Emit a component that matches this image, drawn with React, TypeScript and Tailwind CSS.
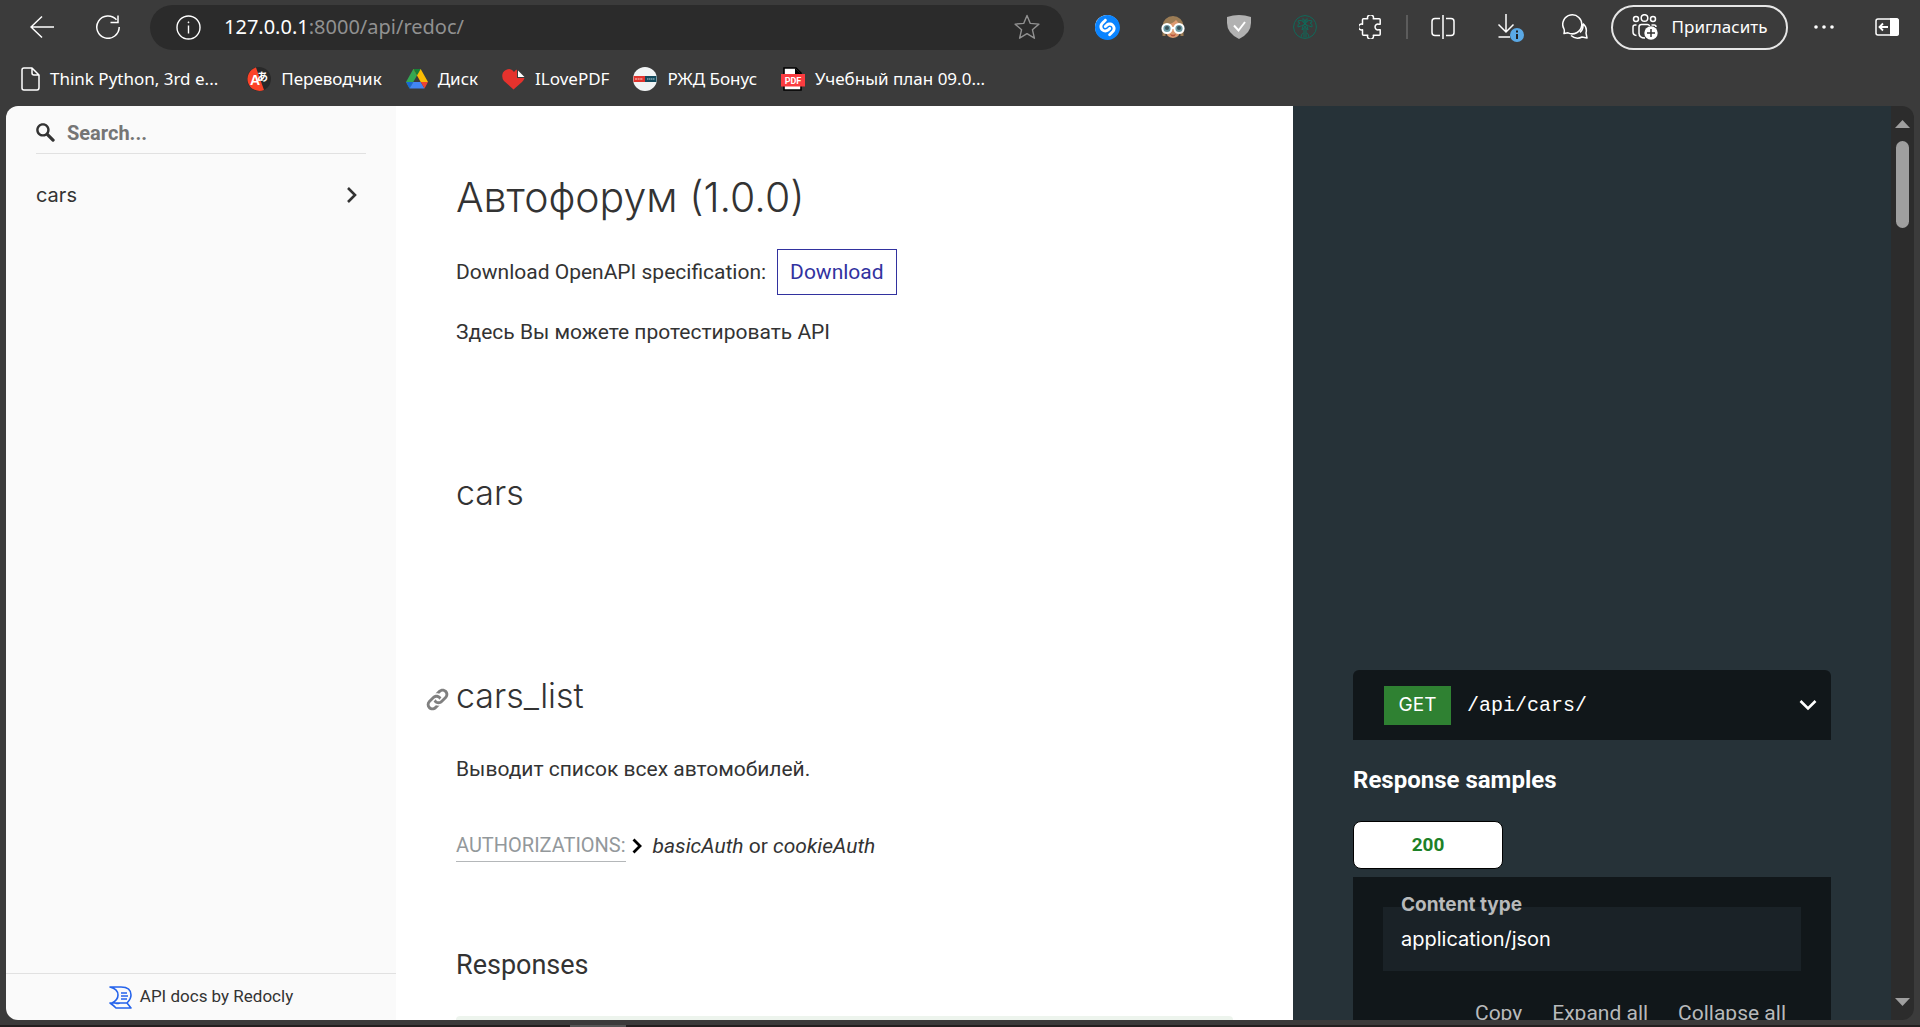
import type { ReactNode } from "react";
import { SiShazam } from "react-icons/si";

const UI = "font-['Noto_Sans','Open_Sans',sans-serif]";
const BODY = "font-['Roboto',sans-serif]";
const HEAD = "font-['Inter','Noto_Sans',sans-serif]";

function ToolButton({ label, children }: { label: string; children: ReactNode }) {
  return (
    <button type="button" aria-label={label} className="flex h-11 w-[66px] shrink-0 items-center justify-center text-white">
      {children}
    </button>
  );
}

function Bookmark({ icon, children }: { icon: ReactNode; children: ReactNode }) {
  return (
    <a href="#" className="flex items-center gap-[10px] text-[17px] leading-6 whitespace-nowrap text-white first:mr-[5px]">
      {icon}
      {children}
    </a>
  );
}

function Toolbar() {
  return (
    <div className="flex h-[54px] items-center">
      <button type="button" aria-label="Back" className="ml-[30px] text-white">
        <svg width="24" height="24" viewBox="0 0 24 24" fill="none" stroke="currentColor" strokeWidth="1.5">
          <path d="M12 1.5 1 12l11 10.5M1 12h23" />
        </svg>
      </button>
      <button type="button" aria-label="Reload" className="ml-[42px] text-white">
        <svg width="24" height="24" viewBox="0 0 24 24" fill="none" stroke="currentColor" strokeWidth="1.5">
          <path d="M20.5 4.8A11.2 11.2 0 1 0 23.2 12M22 0.500v7h-7.500" />
        </svg>
      </button>
      <div className="mr-[10px] ml-[30px] flex h-[45px] min-w-0 flex-1 items-center rounded-full bg-[#2b2b2b] px-6">
        <svg className="ml-[2px] shrink-0" width="25" height="25" viewBox="0 0 25 25" fill="none" stroke="#fff" strokeWidth="1.4">
          <circle cx="12.500" cy="12.500" r="11.500" />
          <path d="M12.500 10.500v8" />
          <circle cx="12.500" cy="7.300" r="0.600" fill="#fff" strokeWidth="0.600" />
        </svg>
        <div className="relative ml-[23px] flex-1 text-[20px] leading-7">
          <div className="whitespace-nowrap text-[#919191]">
            <span className="text-white">127.0.0.1</span>:8000/api/redoc/
          </div>
          <input aria-label="Address" className="absolute inset-0 w-full bg-transparent text-transparent outline-none" />
        </div>
        <button type="button" aria-label="Add to favourites" className="text-[#919191]">
          <svg width="26" height="26" viewBox="0 0 26 26" fill="none" stroke="currentColor" strokeWidth="1.4" strokeLinejoin="round">
            <path d="m13 1.500 3.300 7.900 8.600.700-6.500 5.600 2 8.500L13 19.700l-7.400 4.500 2-8.500L1.100 10.100l8.600-.700z" />
          </svg>
        </button>
      </div>

      <ToolButton label="Shazam">
        <span className="flex size-6 items-center justify-center rounded-full bg-white">
          <SiShazam size={25} color="#0a84ff" className="shrink-0" />
        </span>
      </ToolButton>
      <ToolButton label="Profile extension">
        <svg width="24" height="24" viewBox="0 0 24 24">
          <path d="M1.500 21V11a10.500 10 0 0 1 21 0v10h-3V12h-15v9z" fill="#9b7c55" />
          <path d="M4 10q8-1 11-5 2 3 5 4v6q-1 7-8 8-7-1-8-8z" fill="#dd9a70" />
          <path d="M9 19q3 1.500 6 0-1 2.500-3 2.500T9 19z" fill="#b9573f" />
          <circle cx="6" cy="13.500" r="4.600" fill="#6c9ca6" stroke="#fff" strokeWidth="2" />
          <circle cx="18" cy="13.500" r="4.600" fill="#6c9ca6" stroke="#fff" strokeWidth="2" />
          <path d="M10.500 13h3" stroke="#fff" strokeWidth="2" />
          <circle cx="6" cy="13" r="2" fill="#3c525a" />
          <circle cx="18" cy="13" r="2" fill="#3c525a" />
        </svg>
      </ToolButton>
      <ToolButton label="Ad blocker">
        <svg width="24" height="24" viewBox="0 0 24 24">
          <path d="M0 2q12-4 24 0v6q0 10-12 16Q0 18 0 8z" fill="#b1b1b1" />
          <path d="m7 10.500 4.500 5L18 7" fill="none" stroke="#fff" strokeWidth="2" />
        </svg>
      </ToolButton>
      <ToolButton label="Palm extension">
        <svg width="24" height="24" viewBox="0 0 24 24" fill="none" stroke="#0f6a5a" strokeWidth="1">
          <circle cx="12" cy="12" r="11.400" />
          <path d="M12 9q-3-5-7-3 0 2 2 2-3 1-2 4 4-1 7-3zm0 0q3-5 7-3 0 2-2 2 3 1 2 4-4-1-7-3zm0 0q-3 2-3 6 2-1 3-4m0-2q3 2 3 6-2-1-3-4m0-2Q9 6 10 3.500q2 1 2 4 0-3 2-4 1 2.500-2 5.500M11 13v9.500M13 13v9.500M8 22q0-3 2.500-4M16 22q0-3-2.500-4" />
        </svg>
      </ToolButton>
      <ToolButton label="Extensions">
        <svg width="24" height="24" viewBox="0 0 24 24" fill="none" stroke="currentColor" strokeWidth="1.500" strokeLinejoin="round">
          <path d="M4.500 3.800h4.200a3 3 0 1 1 5.600 0h5.900q1 0 1 1v4.400h-1.500a2.900 2.900 0 1 0 0 5.600h1.500v4.400q0 1-1 1h-5.900a3 3 0 1 1-5.600 0H4.500q-1 0-1-1v-4.400a3 3 0 1 1 0-5.600V4.800q0-1 1-1z" />
        </svg>
      </ToolButton>
      <div className="mx-[2px] h-6 w-[2px] shrink-0 bg-[#5c5c5c]" />
      <ToolButton label="Split screen">
        <svg width="24" height="24" viewBox="0 0 24 24" fill="none" stroke="currentColor" strokeWidth="1.500">
          <path d="M12 0v24M9 3.500H4q-3 0-3 3v11q0 3 3 3h5M15 3.500h5q3 0 3 3v11q0 3-3 3h-5" />
        </svg>
      </ToolButton>
      <ToolButton label="Downloads">
        <svg className="ml-[4px]" width="28" height="30" viewBox="0 0 28 30" fill="none" stroke="currentColor" strokeWidth="1.500">
          <path d="M9 2v17.500M1.500 12.500 9 20l7.500-7.500M1.500 25H13" />
          <circle cx="20" cy="23" r="7" fill="#5aa9e6" stroke="none" />
          <path d="M20 22v5M20 18.500v2" stroke="#222" strokeWidth="2" />
        </svg>
      </ToolButton>
      <ToolButton label="Chat">
        <svg width="26" height="26" viewBox="0 0 26 26" fill="none" stroke="currentColor" strokeWidth="1.500" strokeLinejoin="round">
          <path d="M2 19.500q.700-3 0-4.500a9.500 9.500 0 1 1 4 3.800zM21 9.500q4.500 4 3 9.500l1 5-5-1q-6 3-11-1.500M18 18.500q3.500-3 3-8.500" />
        </svg>
      </ToolButton>
      <button
        type="button"
        className="ml-[3px] flex h-[45px] w-[177px] shrink-0 items-center justify-center gap-[14px] rounded-full border-2 border-[#e6e6e6] text-[17px] leading-6 text-white"
      >
        <svg width="26" height="26" viewBox="0 0 26 26" fill="none" stroke="currentColor" strokeWidth="1.500">
          <circle cx="4" cy="5" r="2.500" />
          <circle cx="12.500" cy="4" r="3.300" />
          <circle cx="21" cy="5" r="2.500" />
          <path d="M4.500 11H3q-2 0-2 2v5q0 3 3.500 3.500M7 20v-7q0-2.500 2.500-2.500h6q1.500 0 2.200 1.500M7 19q0 5 6 5M19.500 11H22q2 0 2 2" />
          <circle cx="19" cy="19" r="6.700" fill="#fff" stroke="none" />
          <path d="M19 15v8M15 19h8" stroke="#333" />
        </svg>
        Пригласить
      </button>
      <ToolButton label="Settings and more">
        <svg className="ml-[6px]" width="20" height="4" viewBox="0 0 20 4" fill="currentColor">
          <circle cx="2" cy="2" r="1.800" />
          <circle cx="10" cy="2" r="1.800" />
          <circle cx="18" cy="2" r="1.800" />
        </svg>
      </ToolButton>
      <ToolButton label="Sidebar">
        <svg width="24" height="18" viewBox="0 0 24 18" fill="none" stroke="currentColor" strokeWidth="1.500">
          <rect x="1" y="1" width="22" height="16" rx="2" />
          <path d="M15 0h6.500Q24 0 24 2.500v13q0 2.500-2.500 2.500H15z" fill="#fff" stroke="none" />
          <path d="M13 9H5M8 5.500 4.500 9 8 12.500" strokeWidth="1.800" />
        </svg>
      </ToolButton>
    </div>
  );
}

function Bookmarks() {
  return (
    <nav aria-label="Bookmarks" className="flex h-[52px] items-center gap-6 pb-[2px] pl-5">
      <Bookmark
        icon={
          <svg width="20" height="24" viewBox="0 0 20 24" fill="none" stroke="#fff" strokeWidth="1.500" strokeLinejoin="round">
            <path d="M4 1h8l7 7v12.500q0 2.500-2 2.500H4q-2 0-2-2V3q0-2 2-2zM12 1v5q0 2 2 2h5" />
          </svg>
        }
      >
        Think Python, 3rd e...
      </Bookmark>
      <Bookmark
        icon={
          <svg width="24" height="24" viewBox="0 0 24 24">
            <circle cx="12" cy="12" r="12" fill="#292929" />
            <path d="M9 .400A12 12 0 1 0 17 23z" fill="#fc4328" />
            <text x="3" y="17.500" fontSize="14" fontWeight="700" fill="#fff" fontFamily="Liberation Sans, sans-serif">A</text>
            <text x="10" y="13.500" fontSize="11" fontWeight="700" fill="#fff" fontFamily="Noto Sans CJK JP, sans-serif">あ</text>
          </svg>
        }
      >
        Переводчик
      </Bookmark>
      <Bookmark
        icon={
          <svg width="22" height="20" viewBox="0 0 22 20">
            <path d="M7.300 0 0 13l3.500 6.500 7.500-13z" fill="#34a853" />
            <path d="M7.300 0h7.400L22 13h-7.300z" fill="#fbbc04" />
            <path d="M7.300 0h7.400L11 6.500z" fill="#188038" />
            <path d="M0 13h7.300l-3.800 6.500z" fill="#1967d2" />
            <path d="M7.300 13h7.400l3.800 6.500h-15z" fill="#4285f4" />
            <path d="M14.700 13H22l-3.500 6.500z" fill="#ea4335" />
          </svg>
        }
      >
        Диск
      </Bookmark>
      <Bookmark
        icon={
          <svg width="23" height="21" viewBox="0 0 23 21">
            <path d="M11.500 20.500 2 12Q-1 8 1 3.500 3.500 0 7.500 0q3 .500 4.500 3 1-2 3-2.500V9h7.500Q22 11 20 13z" fill="#e5322d" />
            <path d="M16 1.500V8h6.500z" fill="#fff" />
          </svg>
        }
      >
        ILovePDF
      </Bookmark>
      <Bookmark
        icon={
          <svg width="24" height="24" viewBox="0 0 24 24">
            <circle cx="12" cy="12" r="12" fill="#f1f4f5" />
            <path d="M.500 9H12v6H.500z" fill="#e1352f" />
            <path d="M12 9h11.500v6H12z" fill="#124a5d" />
            <path d="M2 12h8" stroke="#f0a09b" strokeWidth="1.500" strokeDasharray="2 .600" />
            <path d="M14 12h8" stroke="#7fa3ae" strokeWidth="1.500" strokeDasharray="1.500 .500" />
          </svg>
        }
      >
        РЖД Бонус
      </Bookmark>
      <Bookmark
        icon={
          <svg width="24" height="24" viewBox="0 0 24 24">
            <path d="M3 1h12l5 5v17H3z" fill="#fff" stroke="#000" strokeWidth="1.600" />
            <path d="M14 1v6h6.500z" fill="#000" />
            <path d="M0 7h24v12.500H0z" fill="#fb3c40" />
            <text x="12" y="17" textAnchor="middle" fontSize="9" fontWeight="700" fill="#fff" fontFamily="Roboto, sans-serif">PDF</text>
          </svg>
        }
      >
        Учебный план 09.0...
      </Bookmark>
    </nav>
  );
}

function Sidebar() {
  return (
    <aside className={`flex w-[390px] shrink-0 flex-col bg-[#fafafa] text-[#333] ${BODY}`}>
      <div className="mx-[30px] flex h-12 items-center gap-3 border-b border-[#e1e1e1] pt-[6px]">
        <svg width="19" height="19" viewBox="0 0 1000 1000" fill="#333">
          <path d="M968.200 849.400 667.300 549c83.900-136.500 66.700-317.400-51.700-435.600C477.100-25 252.500-25 113.900 113.400c-138.500 138.300-138.500 362.600 0 501C219.200 730.100 413.200 743 547.600 666.500l301.900 301.400c43.600 43.600 76.900 14.900 104.200-12.400 27.300-27.300 58-62.500 14.500-106.100zM524.500 522c-88.900 88.700-233 88.700-321.800 0-88.900-88.700-88.900-232.600 0-321.300 88.900-88.700 233-88.700 321.800 0 88.900 88.700 88.900 232.600 0 321.300z" />
        </svg>
        <input
          type="search"
          aria-label="Search"
          placeholder="Search..."
          className="min-w-0 flex-1 bg-transparent text-[20px] leading-6 font-bold outline-none placeholder:text-[#757575]"
        />
      </div>
      <a href="#cars" className={`mx-[30px] mt-[25px] flex items-center justify-between pr-[8px] text-[20px] leading-8 ${HEAD}`}>
        cars
        <svg width="12" height="16" viewBox="0 0 12 16" fill="none" stroke="#333" strokeWidth="2.600">
          <path d="m2 1 7 7-7 7" />
        </svg>
      </a>
      <div className="mt-auto flex h-[47px] items-center justify-center gap-2 border-t border-[#e1e1e1] text-[17px]">
        <svg width="23" height="23" viewBox="0 0 23 23" fill="none" stroke="#2563eb" strokeWidth="1.600" strokeLinejoin="round">
          <path d="M1 1h11q10 0 10 8 0 4-4 8H3q6-3 6-8 0-6-8-8zM12 7h6M12 10h7M12 13h6M1 17h5q4 1 5 0h7l4 5H7q-3-3-6-5z" />
        </svg>
        <a href="#redocly">API docs by Redocly</a>
      </div>
    </aside>
  );
}

function Row({ children, aside }: { children: ReactNode; aside?: ReactNode }) {
  return (
    <section className="grid grid-cols-[3fr_2fr]">
      <div className="bg-white px-[60px]">{children}</div>
      <div className="bg-[#263238] px-[60px]">{aside}</div>
    </section>
  );
}

function Samples() {
  return (
    <div className="pt-[60px] text-white">
      <button type="button" className="flex h-[70px] w-full items-center rounded-t-md bg-[#11171a] pr-[14px] pl-[31px] text-left">
        <span className={`flex h-[39px] w-[67px] items-center justify-center bg-[#2f8132] text-[19px] ${HEAD}`}>GET</span>
        <span className="ml-4 pt-[2px] font-['Liberation_Mono',monospace] text-[20px]">/api/cars/</span>
        <svg className="ml-auto" width="18" height="12" viewBox="0 0 18 12" fill="none" stroke="#fff" strokeWidth="2.600">
          <path d="m1.500 2 7.500 7.500L16.500 2" />
        </svg>
      </button>
      <h3 className="mt-6 text-[24px] leading-8 font-bold">Response samples</h3>
      <button type="button" className="mt-[25px] h-12 w-[150px] rounded-lg border border-black bg-white text-[19px] font-bold text-[#1d8127]">
        200
      </button>
      <div className="mt-2 bg-[#11171a] px-[30px] pt-[30px] pb-10">
        <div className={`relative h-16 bg-[#1a2227] ${HEAD}`}>
          <label htmlFor="content-type" className="absolute -top-3.5 left-[18px] text-[19px] leading-6 font-bold text-[#b8babb]">
            Content type
          </label>
          <select id="content-type" className="h-16 w-full appearance-none bg-transparent px-[18px] text-[20px] text-white outline-none">
            <option>application/json</option>
          </select>
        </div>
        <div className="mt-[26px] flex justify-end gap-[30px] pr-[15px] text-[21px] leading-8 text-[#b8babb]">
          <button type="button">Copy</button>
          <button type="button">Expand all</button>
          <button type="button">Collapse all</button>
        </div>
      </div>
    </div>
  );
}

function Docs() {
  return (
    <main className={`min-w-0 flex-1 overflow-hidden bg-white text-[21px] leading-8 text-[#333] ${BODY}`}>
      <Row>
        <div className="pt-[60px] pb-[86px]">
          <h1 className={`text-[41px] leading-[62px] font-light ${HEAD}`}>Автофорум (1.0.0)</h1>
          <div className="mt-[21px] flex items-center gap-[11px]">
            Download OpenAPI specification:
            <a href="#download" className="flex h-[46px] items-center border border-[#32329f] px-3 text-[#32329f]">
              Download
            </a>
          </div>
          <p className="mt-[21px]">Здесь Вы можете протестировать API</p>
        </div>
      </Row>
      <Row>
        <h2 className={`pt-9 pb-[94px] text-[34px] leading-[46px] font-light ${HEAD}`}>cars</h2>
      </Row>
      <Row aside={<Samples />}>
        <div className="pt-[63px]">
          <h2 className={`relative text-[34px] leading-[46px] font-light ${HEAD}`}>
            <a href="#cars_list" aria-label="Link to cars_list" className="absolute top-[15px] -left-[30px]">
              <svg width="23" height="23" viewBox="0 0 512 512" fill="#808080">
                <path d="M459.700 233.400l-90.500 90.500c-50 50-131 50-181 0-7.900-7.800-14-16.700-19.400-25.800l42.100-42.100c2-2 4.500-3.200 6.800-4.500 2.900 9.900 8 19.300 15.800 27.200 25 25 65.600 24.900 90.500 0l90.500-90.500c25-25 25-65.600 0-90.500-24.900-25-65.500-25-90.500 0l-32.200 32.200c-26.100-10.200-54.200-12.900-81.600-8.900l68.600-68.600c50-50 131-50 181 0 49.900 50 49.900 131.100-.100 181zM220.300 382.200l-32.200 32.200c-25 24.900-65.600 24.900-90.500 0-25-25-25-65.600 0-90.500l90.500-90.500c25-25 65.500-25 90.500 0 7.800 7.800 12.900 17.200 15.800 27.100 2.400-1.400 4.800-2.500 6.800-4.500l42.100-42c-5.400-9.200-11.600-18-19.400-25.800-50-50-131-50-181 0l-90.500 90.500c-50 50-50 131 0 181 50 50 131 50 181 0l68.600-68.600c-27.400 4-55.600 1.300-81.700-8.900z" />
              </svg>
            </a>
            cars_list
          </h2>
          <p className="mt-[34px]">Выводит список всех автомобилей.</p>
          <div className="mt-11 flex items-center">
            <span className="border-b border-[#b4b7b9] text-[20px] leading-8 text-[#93989b]">AUTHORIZATIONS:</span>
            <svg className="mr-[10px] ml-[6px]" width="11" height="16" viewBox="0 0 11 16" fill="none" stroke="#000" strokeWidth="2.800">
              <path d="m1.500 1.500 6.500 6.500-6.500 6.500" />
            </svg>
            <span>
              <i>basicAuth</i> or <i>cookieAuth</i>
            </span>
          </div>
          <h3 className="mt-[85px] text-[27px] leading-9">Responses</h3>
          <div className="mt-[33px] h-14 rounded bg-[#edf4ed]" />
        </div>
      </Row>
    </main>
  );
}

function Scrollbar() {
  return (
    <div className="flex w-[23px] shrink-0 flex-col items-center bg-[#2c2c2c] py-[14px]">
      <svg width="15" height="8" viewBox="0 0 15 8" fill="#9f9f9f">
        <path d="M7.500 0 15 8H0z" />
      </svg>
      <div className="mt-[13px] h-[87px] w-[13px] rounded-full bg-[#9f9f9f]" />
      <svg className="mt-auto" width="15" height="8" viewBox="0 0 15 8" fill="#9f9f9f">
        <path d="M7.500 8 15 0H0z" />
      </svg>
    </div>
  );
}

export default function App() {
  return (
    <div className={`flex h-screen flex-col overflow-hidden bg-[#3b3b3b] ${UI}`}>
      <header className="shrink-0">
        <Toolbar />
        <Bookmarks />
      </header>
      <div className="mx-[6px] mb-[5px] flex min-h-0 flex-1 overflow-hidden rounded-xl">
        <Sidebar />
        <Docs />
        <Scrollbar />
      </div>
      <div className="flex h-[2px] shrink-0 bg-[#231f20]">
        <div className="ml-[570px] w-[56px] bg-[#555]" />
      </div>
    </div>
  );
}
